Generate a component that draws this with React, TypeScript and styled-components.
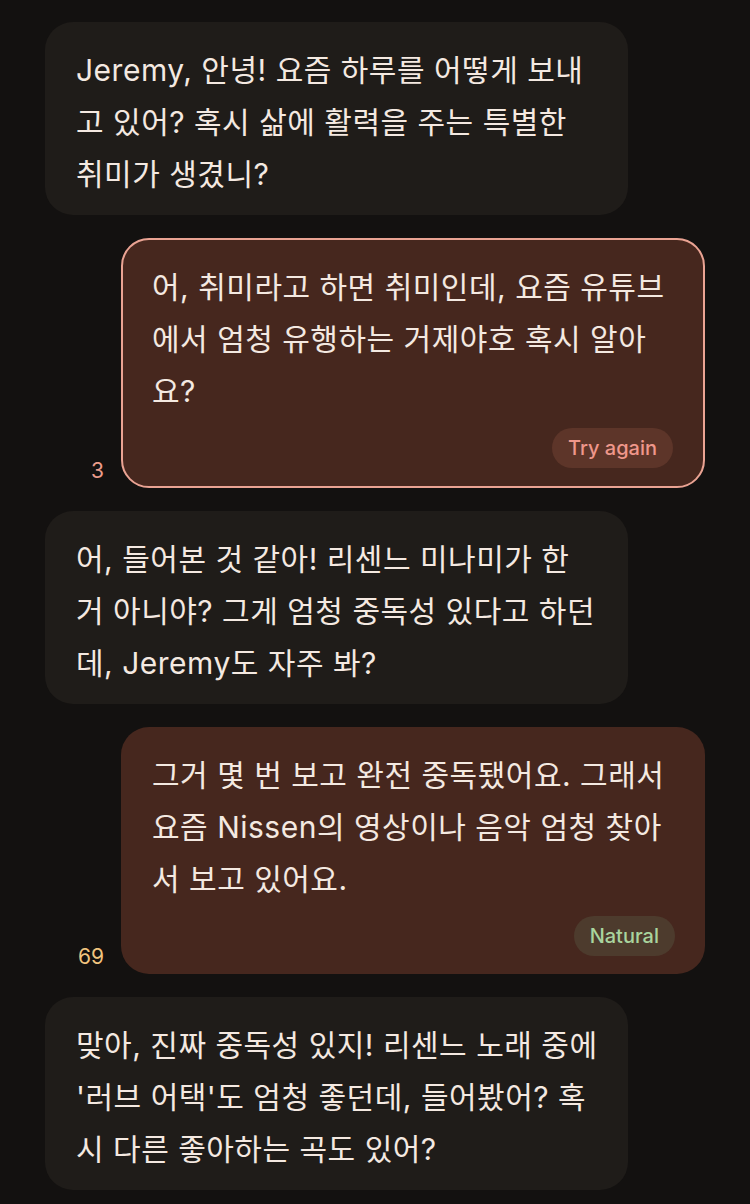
import React from "react";
import styled, { createGlobalStyle } from "styled-components";

type Tone = "retry" | "natural";

interface Message {
  from: "ai" | "user";
  lines: string[];
  score?: string;
  tag?: { label: string; tone: Tone };
}

const messages: Message[] = [
  {
    from: "ai",
    lines: [
      "Jeremy, 안녕! 요즘 하루를 어떻게 보내",
      "고 있어? 혹시 삶에 활력을 주는 특별한",
      "취미가 생겼니?",
    ],
  },
  {
    from: "user",
    lines: [
      "어, 취미라고 하면 취미인데, 요즘 유튜브",
      "에서 엄청 유행하는 거제야호 혹시 알아",
      "요?",
    ],
    score: "3",
    tag: { label: "Try again", tone: "retry" },
  },
  {
    from: "ai",
    lines: [
      "어, 들어본 것 같아! 리센느 미나미가 한",
      "거 아니야? 그게 엄청 중독성 있다고 하던",
      "데, Jeremy도 자주 봐?",
    ],
  },
  {
    from: "user",
    lines: [
      "그거 몇 번 보고 완전 중독됐어요. 그래서",
      "요즘 Nissen의 영상이나 음악 엄청 찾아",
      "서 보고 있어요.",
    ],
    score: "69",
    tag: { label: "Natural", tone: "natural" },
  },
  {
    from: "ai",
    lines: [
      "맞아, 진짜 중독성 있지! 리센느 노래 중에",
      "'러브 어택'도 엄청 좋던데, 들어봤어? 혹",
      "시 다른 좋아하는 곡도 있어?",
    ],
  },
];

const GlobalStyle = createGlobalStyle`
  html, body {
    margin: 0;
    padding: 0;
    background: #131110;
  }
  body {
    font-family: Inter, "Noto Sans CJK KR", sans-serif;
    -webkit-font-smoothing: antialiased;
  }
`;

const Thread = styled.div`
  display: flex;
  flex-direction: column;
  gap: 23px;
  padding: 22px 45px 24px;
  min-height: 1204px;
  box-sizing: border-box;
  background: #131110;
`;

const AiBubble = styled.div`
  align-self: flex-start;
  width: 583px;
  box-sizing: border-box;
  padding: 22px 31px 15px;
  border-radius: 28px;
  background: #1f1c19;
`;

const UserRow = styled.div`
  align-self: stretch;
  display: grid;
  grid-template-columns: 1fr 584px;
  column-gap: 17px;
  align-items: end;
`;

const Score = styled.span<{ $tone: Tone }>`
  justify-self: end;
  padding-bottom: 4px;
  font-family: Inter, sans-serif;
  font-size: 21px;
  line-height: 26px;
  color: ${(p) => (p.$tone === "retry" ? "#ec9c8b" : "#f1c47f")};
`;

const UserBubble = styled.div<{ $outlined: boolean }>`
  display: flex;
  flex-direction: column;
  box-sizing: border-box;
  padding: ${(p) => (p.$outlined ? "21px 30px 18px 29px" : "22px 30px 18px 31px")};
  border-radius: 28px;
  background: #46271e;
  border: ${(p) => (p.$outlined ? "2px solid #eaa393" : "none")};
`;

const Text = styled.p`
  margin: 0;
  font-size: 30px;
  line-height: 52px;
  color: #f4e9e1;
  white-space: nowrap;
  letter-spacing: 0.5px;
`;

const Tag = styled.span<{ $tone: Tone }>`
  align-self: flex-end;
  margin-top: 11px;
  height: 40px;
  padding: 0 16px;
  display: flex;
  align-items: center;
  border-radius: 20px;
  font-family: Inter, sans-serif;
  font-size: 20px;
  font-weight: 500;
  background: ${(p) => (p.$tone === "retry" ? "#5d3529" : "#4d3b2d")};
  color: ${(p) => (p.$tone === "retry" ? "#ef978b" : "#a9d49e")};
`;

function Lines({ lines }: { lines: string[] }) {
  return (
    <Text>
      {lines.map((line, i) => (
        <React.Fragment key={i}>
          {line}
          {i < lines.length - 1 && <br />}
        </React.Fragment>
      ))}
    </Text>
  );
}

export default function App() {
  return (
    <>
      <GlobalStyle />
      <Thread>
        {messages.map((msg, i) => {
          if (msg.from === "ai") {
            return (
              <AiBubble key={i}>
                <Lines lines={msg.lines} />
              </AiBubble>
            );
          }
          const tone = msg.tag?.tone ?? "natural";
          return (
            <UserRow key={i}>
              <Score $tone={tone}>{msg.score}</Score>
              <UserBubble $outlined={tone === "retry"}>
                <Lines lines={msg.lines} />
                {msg.tag && <Tag $tone={tone}>{msg.tag.label}</Tag>}
              </UserBubble>
            </UserRow>
          );
        })}
      </Thread>
    </>
  );
}
